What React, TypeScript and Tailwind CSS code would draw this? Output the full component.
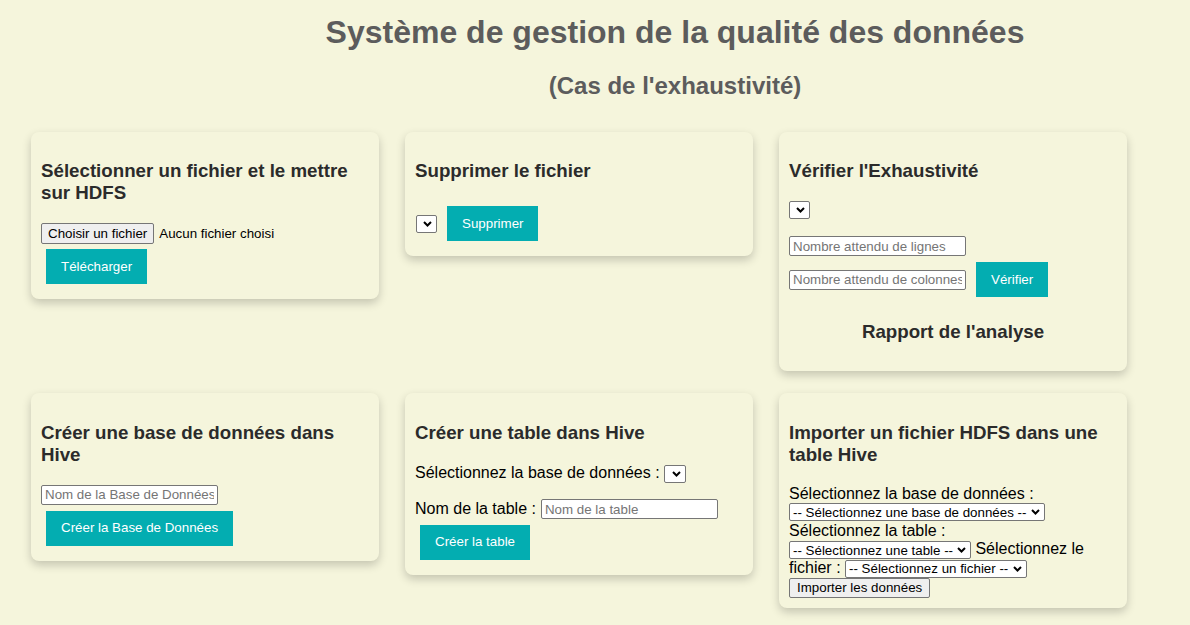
import React from "react";

const font = { fontFamily: '"Liberation Sans", Arial, sans-serif' };

function Chevron() {
  return (
    <svg
      width="9"
      height="6"
      viewBox="0 0 9 6"
      className="pointer-events-none absolute right-[5px] top-1/2 -translate-y-1/2"
    >
      <path d="M1 1 L4.5 4.5 L8 1" fill="none" stroke="#000" strokeWidth="2" />
    </svg>
  );
}

function Sel({ wrap, label }: { wrap: string; label?: string }) {
  return (
    <span className={`relative inline-block h-[18px] align-middle ${wrap}`}>
      <select className="block h-[18px] w-full appearance-none rounded-[2px] border border-[#767676] bg-white pl-[3px] pr-[16px] text-[13.33px] leading-[15px] text-black">
        {label ? <option>{label}</option> : <option></option>}
      </select>
      <Chevron />
    </span>
  );
}

function TealButton({ children, extra = "" }: { children: React.ReactNode; extra?: string }) {
  return (
    <button
      className={`m-[5px] h-[35px] bg-[#03adb1] px-[15px] text-[13.33px] text-white ${extra}`}
    >
      {children}
    </button>
  );
}

function Card({ children }: { children: React.ReactNode }) {
  return (
    <div className="rounded-lg bg-[#f5f5dc] p-[10px] shadow-[0_4px_10px_rgba(0,0,0,0.2)]">
      {children}
    </div>
  );
}

function H3({ children, extra = "" }: { children: React.ReactNode; extra?: string }) {
  return (
    <h3 className={`my-[18.72px] text-[18.72px] leading-[22px] font-bold text-[#2b2b2b] ${extra}`}>
      {children}
    </h3>
  );
}

function TextInput({ placeholder, w }: { placeholder: string; w: string }) {
  return (
    <input
      placeholder={placeholder}
      className={`h-[20px] rounded-[2px] border border-[#767676] bg-white px-[3px] text-[13.33px] text-black placeholder:text-[#757575] ${w}`}
    />
  );
}

export default function App() {
  return (
    <div className="min-h-[625px] w-full overflow-hidden bg-[#f5f5dc] text-black" style={font}>
      <div className="pl-[160px] text-center text-[#5c5c5c]">
        <h1 className="pt-[14px] text-[32px] leading-[37px] font-bold">
          Système de gestion de la qualité des données
        </h1>
        <h2 className="mt-[21px] text-[24px] leading-[27.6px] font-bold">
          (Cas de l'exhaustivité)
        </h2>
      </div>

      <div className="mt-[32px] grid grid-cols-[repeat(3,348px)] items-start gap-x-[26px] gap-y-[22px] pl-[31px]">
        {/* Card 1 */}
        <Card>
          <H3>Sélectionner un fichier et le mettre sur HDFS</H3>
          <div className="flex h-[21px] items-center text-[13.33px]">
            <span className="flex h-[21px] items-center rounded-[2px] border border-[#767676] bg-[#efefef] px-[6px]">
              Choisir un fichier
            </span>
            <span className="ml-[5px]">Aucun fichier choisi</span>
          </div>
          <TealButton extra="block">Télécharger</TealButton>
        </Card>

        {/* Card 2 */}
        <Card>
          <H3>Supprimer le fichier</H3>
          <div className="flex items-center">
            <Sel wrap="w-[21px] ml-[1px]" />
            <TealButton extra="ml-[10px]">Supprimer</TealButton>
          </div>
        </Card>

        {/* Card 3 */}
        <Card>
          <H3>Vérifier l'Exhaustivité</H3>
          <div className="h-[18px]">
            <Sel wrap="w-[21px] align-top" />
          </div>
          <div className="mt-[17px]">
            <TextInput placeholder="Nombre attendu de lignes" w="w-[177px] block" />
          </div>
          <div className="mt-[1px] flex items-center">
            <TextInput placeholder="Nombre attendu de colonnes" w="w-[177px]" />
            <TealButton extra="ml-[10px]">Vérifier</TealButton>
          </div>
          <H3 extra="text-center">Rapport de l'analyse</H3>
        </Card>

        {/* Card 4 */}
        <Card>
          <H3>Créer une base de données dans Hive</H3>
          <TextInput placeholder="Nom de la Base de Données" w="w-[177px] block" />
          <TealButton extra="block mt-[6px]">Créer la Base de Données</TealButton>
        </Card>

        {/* Card 5 */}
        <Card>
          <H3>Créer une table dans Hive</H3>
          <div className="text-[16px] leading-[19px]">
            Sélectionnez la base de données : <Sel wrap="w-[22px]" />
          </div>
          <div className="mt-[16px] flex h-[21px] items-center text-[16px]">
            <span>Nom de la table :</span>
            <TextInput placeholder="Nom de la table" w="w-[177px] ml-[5px]" />
          </div>
          <TealButton extra="block">Créer la table</TealButton>
        </Card>

        {/* Card 6 */}
        <Card>
          <H3>Importer un fichier HDFS dans une table Hive</H3>
          <div className="text-[16px] leading-[18.4px]">Sélectionnez la base de données :</div>
          <div className="h-[18px]">
            <Sel wrap="w-[256px] align-top" label="-- Sélectionnez une base de données --" />
          </div>
          <div className="text-[16px] leading-[19px]">Sélectionnez la table :</div>
          <div className="text-[16px] leading-[18.5px]">
            <Sel wrap="w-[182px]" label="-- Sélectionnez une table --" /> Sélectionnez le fichier :{" "}
            <Sel wrap="w-[182px]" label="-- Sélectionnez un fichier --" />
          </div>
          <button className="block h-[20px] rounded-[2px] border border-[#767676] bg-[#efefef] px-[7px] text-[13.33px] leading-[16px] text-black">
            Importer les données
          </button>
        </Card>

        {/* Card 7 (below the fold) */}
        <Card>
          <div className="h-[150px]" />
        </Card>
      </div>
    </div>
  );
}
